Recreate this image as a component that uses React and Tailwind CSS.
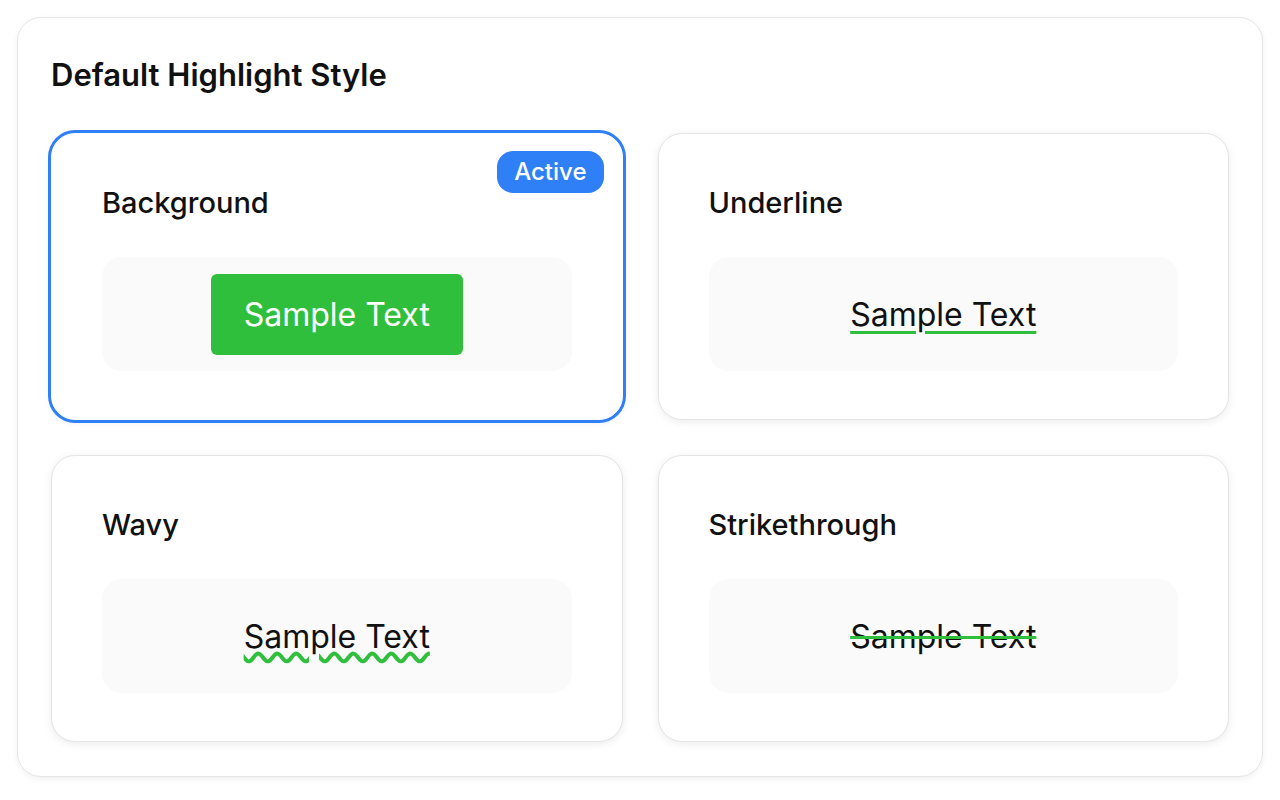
const STYLES = [
  { key: 'background', label: 'Background', active: true },
  { key: 'underline', label: 'Underline' },
  { key: 'wavy', label: 'Wavy' },
  { key: 'strike', label: 'Strikethrough' },
];

function Preview({ kind }) {
  if (kind === 'background') {
    return (
      <span className="rounded-[6px] bg-[#30bf3c] px-[33px] py-[18px] text-[32px] leading-[45px] text-white">
        Sample Text
      </span>
    );
  }
  if (kind === 'underline') {
    return (
      <span className="text-[32px] leading-[45px] text-[#111] underline decoration-[#30bf3c] decoration-[3px] underline-offset-[5px]">
        Sample Text
      </span>
    );
  }
  if (kind === 'wavy') {
    return (
      <span className="text-[32px] leading-[45px] text-[#111] underline decoration-wavy decoration-[#30bf3c] decoration-[3.5px] underline-offset-[4px]">
        Sample Text
      </span>
    );
  }
  return (
    <span className="text-[32px] leading-[45px] text-[#111] line-through decoration-[#30bf3c] decoration-[3px]">
      Sample Text
    </span>
  );
}

function StyleCard({ item }) {
  return (
    <div
      className={
        item.active
          ? 'relative flex h-[287px] flex-col rounded-[24px] border border-white bg-white px-[50px] pt-[51px] ring-[3px] ring-[#2f7ff7] shadow-[0_2px_8px_rgba(0,0,0,0.08)]'
          : 'relative flex h-[287px] flex-col rounded-[24px] border border-[#e4e4e4] bg-white px-[50px] pt-[51px] shadow-[0_2px_8px_rgba(0,0,0,0.08)]'
      }
    >
      {item.active && (
        <span className="absolute right-[18px] top-[17px] flex h-[42px] items-center rounded-[16px] bg-[#2f7ff7] px-[17px] text-[24px] font-medium text-white">
          Active
        </span>
      )}
      <div className="h-[36px] text-[29px] font-medium leading-[36px] text-[#111]">{item.label}</div>
      <div className="mt-[36px] flex h-[114px] items-center justify-center rounded-[20px] bg-[#fafafa]">
        <Preview kind={item.key} />
      </div>
    </div>
  );
}

export default function App() {
  return (
    <div className="min-h-screen bg-white p-[17px]" style={{ fontFamily: 'Inter, "Noto Sans", sans-serif' }}>
      <div className="rounded-[24px] border border-[#e6e6e6] bg-white px-[33px] pb-[34px] pt-[39px] shadow-[0_2px_6px_rgba(0,0,0,0.06)]">
        <h2 className="text-[31px] font-semibold leading-[36px] text-[#111]">Default Highlight Style</h2>
        <div className="mt-[40px] grid grid-cols-2 gap-[35px]">
          {STYLES.map((s) => (
            <StyleCard key={s.key} item={s} />
          ))}
        </div>
      </div>
    </div>
  );
}
